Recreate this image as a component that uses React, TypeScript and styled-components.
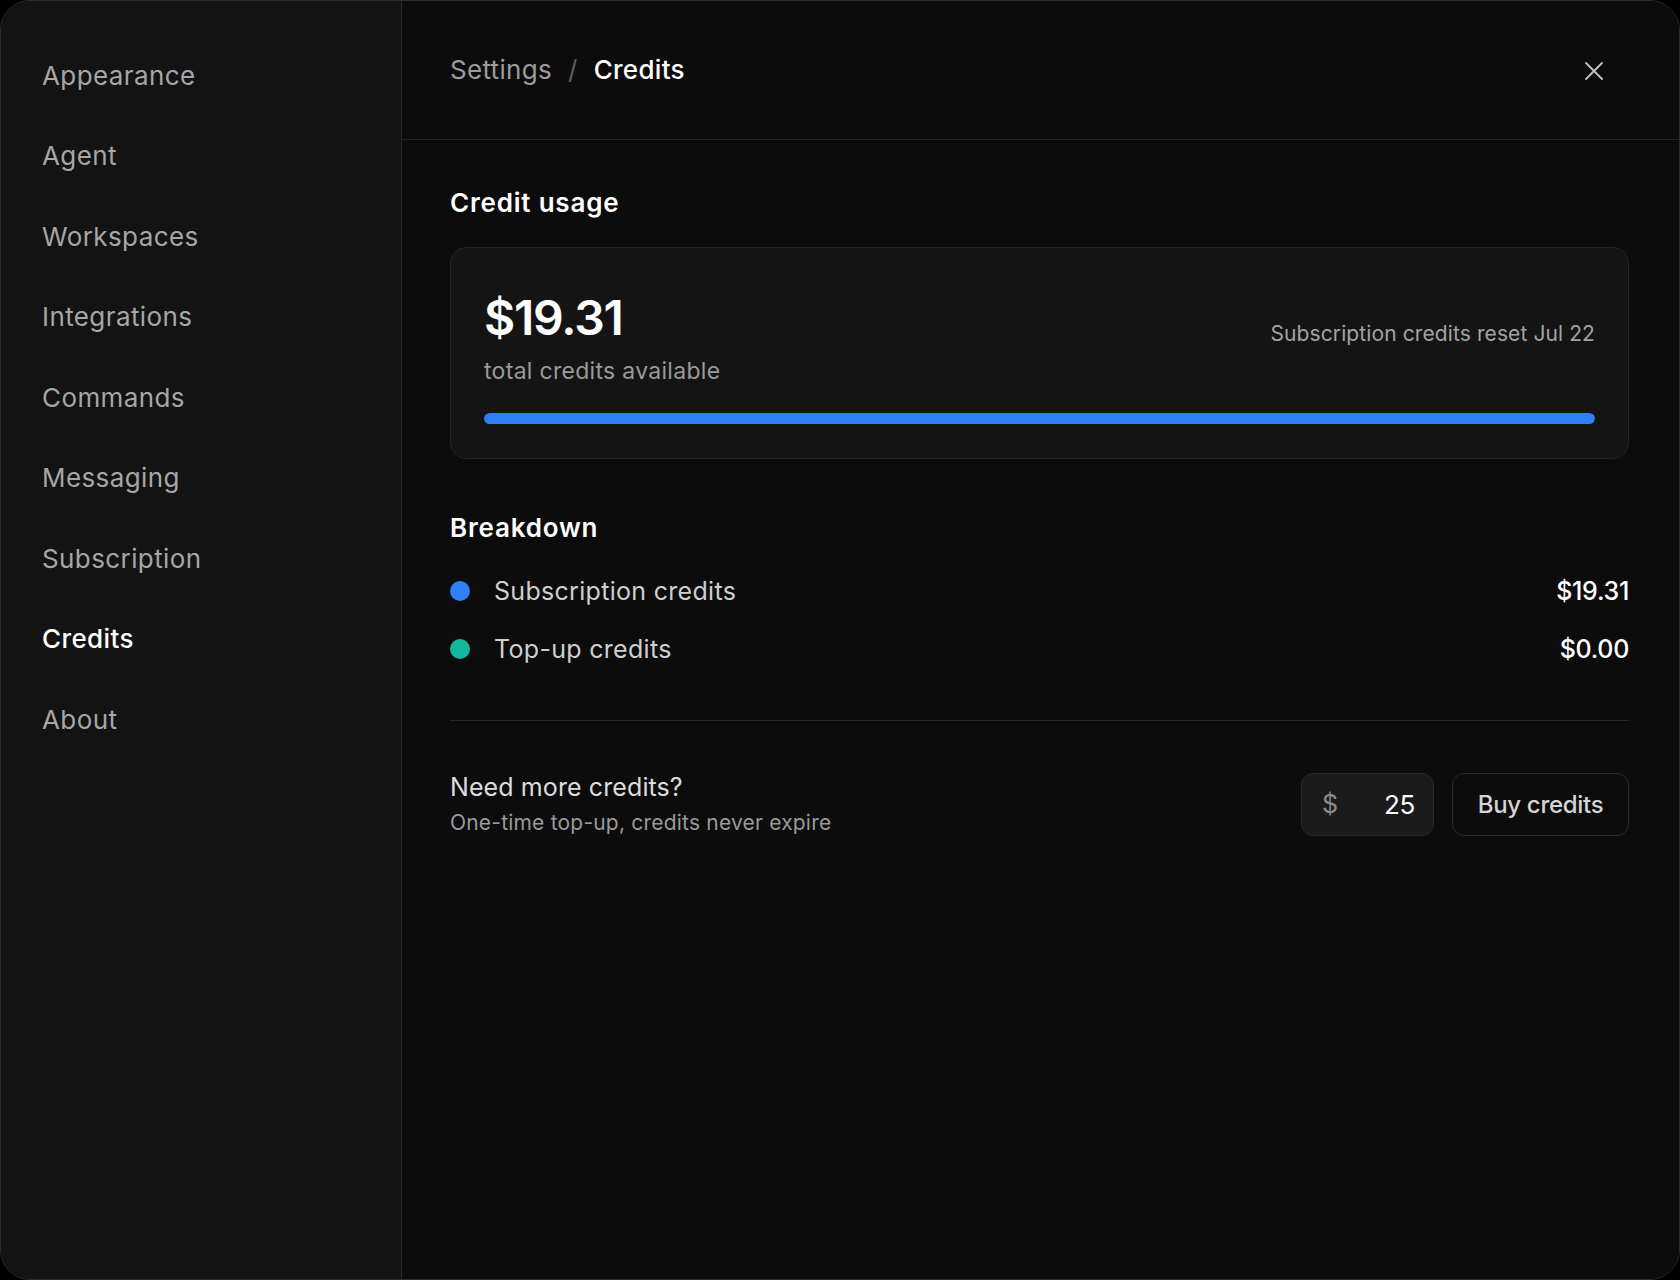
import styled, { createGlobalStyle } from "styled-components";

const GlobalStyle = createGlobalStyle`
  html, body {
    margin: 0;
    padding: 0;
    background: #000;
  }
  * {
    box-sizing: border-box;
  }
  body {
    font-family: Inter, "Noto Sans", "Liberation Sans", sans-serif;
    -webkit-font-smoothing: antialiased;
  }
`;

const navItems = [
  "Appearance",
  "Agent",
  "Workspaces",
  "Integrations",
  "Commands",
  "Messaging",
  "Subscription",
  "Credits",
  "About",
];

const breakdown = [
  { label: "Subscription credits", value: "$19.31", color: "#2f7ff8" },
  { label: "Top-up credits", value: "$0.00", color: "#14b8a0" },
];

export default function App() {
  return (
    <>
      <GlobalStyle />
      <Frame>
        <Sidebar>
          {navItems.map((item) => (
            <NavItem key={item} $active={item === "Credits"}>
              {item}
            </NavItem>
          ))}
        </Sidebar>

        <Main>
          <Header>
            <Breadcrumb>
              <Crumb>Settings</Crumb>
              <Slash>/</Slash>
              <Crumb $current>Credits</Crumb>
            </Breadcrumb>
            <CloseButton aria-label="Close">
              <svg width="20" height="20" viewBox="0 0 20 20" fill="none">
                <path
                  d="M2 2L18 18M18 2L2 18"
                  stroke="#bdbdbd"
                  strokeWidth="2"
                  strokeLinecap="round"
                />
              </svg>
            </CloseButton>
          </Header>

          <Content>
            <SectionTitle>Credit usage</SectionTitle>
            <UsageCard>
              <UsageTop>
                <div>
                  <Amount>$19.31</Amount>
                  <AmountCaption>total credits available</AmountCaption>
                </div>
                <ResetNote>Subscription credits reset Jul 22</ResetNote>
              </UsageTop>
              <Track>
                <Fill style={{ width: "100%" }} />
              </Track>
            </UsageCard>

            <SectionTitle $spaced>Breakdown</SectionTitle>
            <BreakdownList>
              {breakdown.map((row) => (
                <BreakdownRow key={row.label}>
                  <Dot $color={row.color} />
                  <RowLabel>{row.label}</RowLabel>
                  <RowValue>{row.value}</RowValue>
                </BreakdownRow>
              ))}
            </BreakdownList>

            <Divider />

            <TopUpRow>
              <div>
                <TopUpTitle>Need more credits?</TopUpTitle>
                <TopUpHint>One-time top-up, credits never expire</TopUpHint>
              </div>
              <TopUpActions>
                <AmountInput>
                  <Currency>$</Currency>
                  <InputValue>25</InputValue>
                </AmountInput>
                <BuyButton>Buy credits</BuyButton>
              </TopUpActions>
            </TopUpRow>
          </Content>
        </Main>
      </Frame>
    </>
  );
}

const Frame = styled.div`
  display: flex;
  width: 1680px;
  height: 1280px;
  border: 1px solid #2a2a2a;
  border-radius: 30px;
  overflow: hidden;
  background: #0c0c0c;
`;

const Sidebar = styled.nav`
  width: 401px;
  flex-shrink: 0;
  background: #131313;
  border-right: 1px solid #262626;
  padding: 34px 0 0 41px;
  display: flex;
  flex-direction: column;
`;

const NavItem = styled.div<{ $active?: boolean }>`
  height: 80.5px;
  display: flex;
  align-items: center;
  font-size: 26px;
  letter-spacing: 0.4px;
  color: ${(p) => (p.$active ? "#ffffff" : "#a6a6a6")};
  font-weight: ${(p) => (p.$active ? 500 : 400)};
`;

const Main = styled.main`
  flex: 1;
  display: flex;
  flex-direction: column;
  background: #0c0c0c;
`;

const Header = styled.header`
  height: 139px;
  flex-shrink: 0;
  border-bottom: 1px solid #262626;
  display: flex;
  align-items: center;
  justify-content: space-between;
  padding: 0 69px 0 48px;
`;

const Breadcrumb = styled.div`
  display: flex;
  align-items: center;
  gap: 16px;
  font-size: 26px;
  letter-spacing: 0.3px;
  margin-top: -2px;
`;

const Crumb = styled.span<{ $current?: boolean }>`
  color: ${(p) => (p.$current ? "#ffffff" : "#9c9c9c")};
  font-weight: ${(p) => (p.$current ? 500 : 400)};
`;

const Slash = styled.span`
  color: #5f5f5f;
`;

const CloseButton = styled.button`
  width: 32px;
  height: 32px;
  border: none;
  background: transparent;
  padding: 0;
  display: flex;
  align-items: center;
  justify-content: center;
  cursor: pointer;
  margin-top: 1px;
`;

const Content = styled.section`
  padding: 47px 50px 0 48px;
  display: flex;
  flex-direction: column;
`;

const SectionTitle = styled.h2<{ $spaced?: boolean }>`
  margin: ${(p) => (p.$spaced ? "53px" : "0")} 0 0;
  font-size: 26px;
  line-height: 32px;
  font-weight: 600;
  letter-spacing: 0.8px;
  color: #ffffff;
`;

const UsageCard = styled.div`
  margin-top: 28px;
  height: 212px;
  background: #141414;
  border: 1px solid #242424;
  border-radius: 16px;
  padding: 44px 33px 0 33px;
  display: flex;
  flex-direction: column;
`;

const UsageTop = styled.div`
  display: flex;
  align-items: center;
  justify-content: space-between;
`;

const Amount = styled.div`
  font-size: 48px;
  line-height: 52px;
  font-weight: 600;
  letter-spacing: -1.2px;
  color: #ffffff;
`;

const AmountCaption = styled.div`
  margin-top: 12px;
  font-size: 23px;
  line-height: 30px;
  color: #9a9a9a;
  letter-spacing: 0.3px;
`;

const ResetNote = styled.div`
  font-size: 21px;
  color: #a3a3a3;
  letter-spacing: 0.1px;
  margin-top: -12px;
`;

const Track = styled.div`
  margin-top: 27px;
  height: 11px;
  border-radius: 6px;
  background: #262626;
  overflow: hidden;
`;

const Fill = styled.div`
  height: 100%;
  border-radius: 6px;
  background: #2f7ff8;
`;

const BreakdownList = styled.div`
  margin-top: 29px;
  display: flex;
  flex-direction: column;
  gap: 22px;
`;

const BreakdownRow = styled.div`
  display: flex;
  align-items: center;
  height: 36px;
`;

const Dot = styled.span<{ $color: string }>`
  width: 20px;
  height: 20px;
  border-radius: 50%;
  background: ${(p) => p.$color};
  margin-right: 24px;
  flex-shrink: 0;
`;

const RowLabel = styled.span`
  flex: 1;
  font-size: 25px;
  color: #cfcfcf;
  letter-spacing: 0.3px;
`;

const RowValue = styled.span`
  font-size: 25px;
  font-weight: 500;
  color: #ffffff;
  letter-spacing: -0.3px;
`;

const Divider = styled.hr`
  margin: 53px 0 0;
  border: none;
  height: 1px;
  background: #262626;
`;

const TopUpRow = styled.div`
  margin-top: 51px;
  display: flex;
  align-items: center;
  justify-content: space-between;
`;

const TopUpTitle = styled.div`
  font-size: 25px;
  line-height: 30px;
  color: #dcdcdc;
  letter-spacing: 0.1px;
`;

const TopUpHint = styled.div`
  margin-top: 8px;
  font-size: 21px;
  line-height: 26px;
  color: #9a9a9a;
  letter-spacing: 0.2px;
`;

const TopUpActions = styled.div`
  display: flex;
  align-items: center;
  gap: 18px;
`;

const AmountInput = styled.div`
  width: 133px;
  height: 63px;
  border-radius: 12px;
  background: #1b1b1b;
  border: 1px solid #272727;
  display: flex;
  align-items: center;
  justify-content: space-between;
  padding: 0 18px 0 20px;
`;

const Currency = styled.span`
  font-size: 25px;
  color: #8c8c8c;
`;

const InputValue = styled.span`
  font-size: 26px;
  color: #ffffff;
  letter-spacing: -0.3px;
`;

const BuyButton = styled.button`
  width: 177px;
  height: 63px;
  border-radius: 12px;
  background: #0c0c0c;
  border: 1px solid #2b2b2b;
  color: #d4d4d4;
  font-family: inherit;
  font-size: 24px;
  font-weight: 500;
  letter-spacing: -0.3px;
  cursor: pointer;
`;
